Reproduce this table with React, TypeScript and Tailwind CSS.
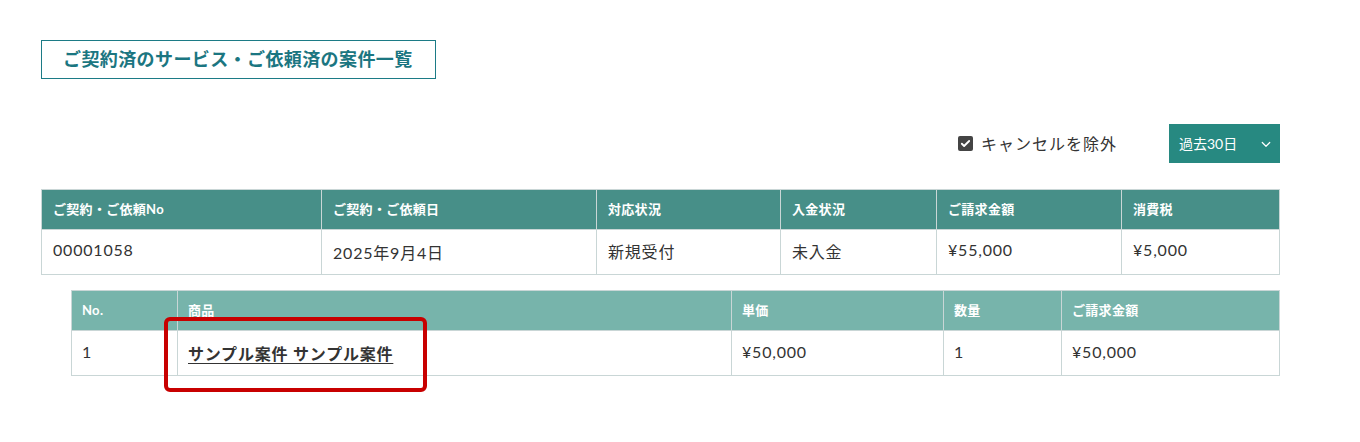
import React from "react";

const font = { fontFamily: "Lato, 'Noto Sans CJK JP', sans-serif" };

const mainCols = [
  { label: "ご契約・ご依頼No", w: "w-[280px]" },
  { label: "ご契約・ご依頼日", w: "w-[275px]" },
  { label: "対応状況", w: "w-[184px]" },
  { label: "入金状況", w: "w-[156px]" },
  { label: "ご請求金額", w: "w-[185px]" },
  { label: "消費税", w: "" },
];

const itemCols = [
  { label: "No.", w: "w-[106px]" },
  { label: "商品", w: "w-[554px]" },
  { label: "単価", w: "w-[212px]" },
  { label: "数量", w: "w-[118px]" },
  { label: "ご請求金額", w: "" },
];

const App = () => {
  return (
    <div className="w-[1360px] h-[442px] bg-white text-[#333]" style={font}>
      <div className="pt-[40px] pl-[41px] pr-[80px]">
        <div className="inline-flex h-[39px] w-[395px] items-center border border-[#1c7b86] pl-[21px]">
          <span className="text-[18px] font-bold tracking-[0.4px] text-[#1b7681]">
            ご契約済のサービス・ご依頼済の案件一覧
          </span>
        </div>

        <div className="mt-[45px] flex items-center justify-end">
          <label className="flex items-center gap-[8px]">
            <span className="flex h-[15px] w-[15px] items-center justify-center rounded-[2px] bg-[#444]">
              <svg width="11" height="11" viewBox="0 0 24 24" fill="none" stroke="white" strokeWidth="4" strokeLinecap="round" strokeLinejoin="round">
                <path d="M4 12.5l5 5L20 6.5" />
              </svg>
            </span>
            <span className="text-[16px] tracking-[1px] text-[#333]">キャンセルを除外</span>
          </label>
          <div className="ml-[52px] flex h-[39px] w-[111px] items-center justify-between bg-[#278981] pl-[10px] pr-[5px] text-white">
            <span className="text-[14px]">過去30日</span>
            <svg width="18" height="18" viewBox="0 0 24 24" fill="none" stroke="white" strokeWidth="1.6" strokeLinecap="round" strokeLinejoin="round">
              <path d="M7 10l5 5 5-5" />
            </svg>
          </div>
        </div>

        <table className="mt-[26px] w-[1239px] border-collapse">
          <thead>
            <tr className="h-[40px] bg-[#478f88]">
              {mainCols.map((c, i) => (
                <th
                  key={`main-head-${i}`}
                  className={`${c.w} border border-[#c9d6d6] px-[11px] text-left text-[13px] font-bold tracking-[0.3px] text-white`}
                >
                  {c.label}
                </th>
              ))}
            </tr>
          </thead>
          <tbody>
            <tr className="h-[45px] text-[16px] tracking-[0.8px]">
              <td className="border border-[#c9d6d6] px-[11px] pb-[4px]">00001058</td>
              <td className="border border-[#c9d6d6] px-[11px] pt-[2px]">2025年9月4日</td>
              <td className="border border-[#c9d6d6] px-[11px]">新規受付</td>
              <td className="border border-[#c9d6d6] px-[11px]">未入金</td>
              <td className="border border-[#c9d6d6] px-[11px] pb-[4px]">¥55,000</td>
              <td className="border border-[#c9d6d6] px-[11px] pb-[4px]">¥5,000</td>
            </tr>
          </tbody>
        </table>

        <div className="relative ml-[30px] mt-[15px] w-[1209px]">
          <table className="w-full border-collapse">
            <thead>
              <tr className="h-[40px] bg-[#77b4ab]">
                {itemCols.map((c, i) => (
                  <th
                    key={`item-head-${i}`}
                    className={`${c.w} border border-[#c9d6d6] px-[10px] text-left text-[13px] font-bold tracking-[0.3px] text-white`}
                  >
                    {c.label}
                  </th>
                ))}
              </tr>
            </thead>
            <tbody>
              <tr className="h-[45px] text-[16px] tracking-[0.8px]">
                <td className="border border-[#c9d6d6] px-[10px] pb-[2px]">1</td>
                <td className="border border-[#c9d6d6] px-[10px] pt-[2px]">
                  <a href="#" className="font-bold text-[#333] underline underline-offset-[3px]">
                    サンプル案件 サンプル案件
                  </a>
                </td>
                <td className="border border-[#c9d6d6] px-[10px] pb-[2px]">¥50,000</td>
                <td className="border border-[#c9d6d6] px-[10px] pb-[2px]">1</td>
                <td className="border border-[#c9d6d6] px-[10px] pb-[2px]">¥50,000</td>
              </tr>
            </tbody>
          </table>
          <div className="pointer-events-none absolute left-[93px] top-[27px] h-[75px] w-[263px] rounded-[6px] border-[4px] border-[#c80000]" />
        </div>
      </div>
    </div>
  );
};

export default App;
